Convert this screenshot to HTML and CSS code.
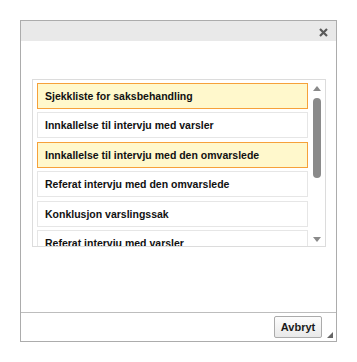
FILE: index.html
```html
<!DOCTYPE html>
<html lang="no">
<head>
    <meta charset="UTF-8">
    <title>Velg mal</title>
    <link rel="stylesheet" href="styles.css">
</head>
<body>
    <div class="dialog">
        <!-- Title bar -->
        <div class="titlebar">
            <svg class="close-btn" width="9" height="9" viewBox="0 0 9 9">
                <path d="M1 1L8 8M8 1L1 8" stroke="#5a5a5a" stroke-width="2.2"/>
            </svg>
        </div>

        <!-- Body with template list -->
        <div class="dialog-body">
            <div class="listbox">
                <div class="list">
                    <div class="list-item selected">Sjekkliste for saksbehandling</div>
                    <div class="list-item">Innkallelse til intervju med varsler</div>
                    <div class="list-item selected">Innkallelse til intervju med den omvarslede</div>
                    <div class="list-item">Referat intervju med den omvarslede</div>
                    <div class="list-item">Konklusjon varslingssak</div>
                    <div class="list-item">Referat intervju med varsler</div>
                </div>
                <div class="scrollbar">
                    <span class="arrow up"></span>
                    <span class="thumb"></span>
                    <span class="track"></span>
                    <span class="arrow down"></span>
                </div>
            </div>
        </div>

        <!-- Footer -->
        <div class="footer">
            <button class="cancel-btn">Avbryt</button>
            <span class="grip"></span>
        </div>
    </div>
</body>
</html>
```

FILE: styles.css
```css
/* General */
body {
    margin: 0;
    padding: 20px 0 0 20px;
    background: #fff;
    font-family: 'Liberation Sans', Arial, sans-serif;
    font-size: 11px;
    color: #111;
}

/* Dialog frame */
.dialog {
    width: 315px;
    height: 320px;
    border: 1px solid #acacac;
    display: flex;
    flex-direction: column;
    background: #fff;
}

.titlebar {
    height: 20px;
    background: #e9e9e9;
    display: flex;
    align-items: center;
    justify-content: flex-end;
    padding-right: 8px;
}

.close-btn {
    margin-top: 2px;
}

.dialog-body {
    flex: 1;
    padding: 38px 10px 0 11px;
}

/* List box */
.listbox {
    height: 166px;
    border: 1px solid #dcdcdc;
    display: flex;
}

.list {
    flex: 1;
    overflow: hidden;
    padding: 3px 0 0 4px;
    display: flex;
    flex-direction: column;
    gap: 3.4px;
}

.list-item {
    flex: none;
    height: 24px;
    line-height: 24px;
    padding-left: 7px;
    border: 1px solid #e6e6e6;
    font-size: 10.5px;
    font-weight: bold;
    white-space: nowrap;
}

.list-item.selected {
    background: #fff8cc;
    border-color: #f6a13a;
}

/* Scrollbar */
.scrollbar {
    width: 17px;
    display: flex;
    flex-direction: column;
    align-items: center;
    padding: 6px 0 4px;
}

.arrow {
    width: 0;
    height: 0;
    border-left: 4px solid transparent;
    border-right: 4px solid transparent;
}

.arrow.up {
    border-bottom: 5px solid #8a8a8a;
}

.arrow.down {
    border-top: 5px solid #8a8a8a;
}

.thumb {
    width: 8px;
    height: 80px;
    margin-top: 7px;
    border-radius: 4px;
    background: #8a8a8a;
}

.track {
    flex: 1;
}

/* Footer */
.footer {
    height: 28px;
    border-top: 1px solid #bdbdbd;
    display: flex;
    align-items: center;
    justify-content: flex-end;
    padding-right: 3px;
    gap: 5px;
}

.cancel-btn {
    width: 48px;
    height: 22px;
    margin-bottom: 1px;
    border: 1px solid #ababab;
    border-radius: 2px;
    background: linear-gradient(#fdfdfd, #e9e9e9);
    font-family: 'Liberation Sans', Arial, sans-serif;
    font-size: 11px;
    font-weight: bold;
    color: #1a1a1a;
    padding: 0;
}

.grip {
    align-self: flex-end;
    margin-bottom: 3px;
    width: 0;
    height: 0;
    border-left: 6px solid transparent;
    border-bottom: 6px solid #666;
}
```
